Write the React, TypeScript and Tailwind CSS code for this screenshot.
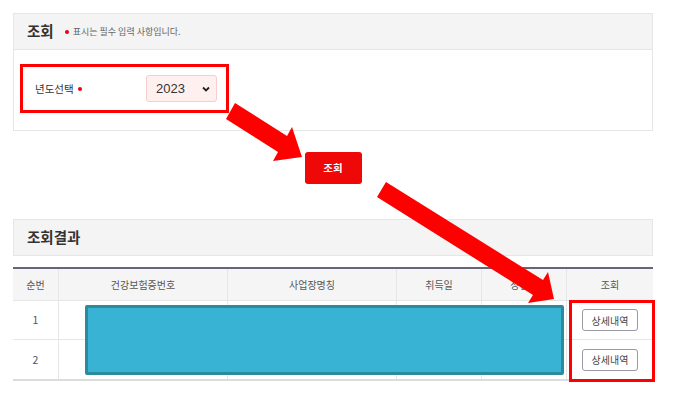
// Year lookup screen (조회 / 조회결과) with annotation overlays.

const FONT = '"Noto Sans CJK KR", "Noto Sans", sans-serif';

const COLUMNS = ['순번', '건강보험증번호', '사업장명칭', '취득일', '상실일', '조회'];

const ROWS = [{ no: 1 }, { no: 2 }];

function RequiredDot() {
  return <span className="inline-block h-[4px] w-[4px] rounded-full bg-[#e60012]" />;
}

function Arrows() {
  // annotation arrows drawn over the page
  return (
    <svg
      className="pointer-events-none absolute left-0 top-0"
      width="682"
      height="410"
      viewBox="0 0 682 410"
    >
      <polygon
        fill="#ff0000"
        points="235,103 287,136 292,127 302,157 273,161 278,152 226,119"
      />
      <polygon
        fill="#ff0000"
        points="386,182 543,280 548,272 554,299 528,303 533,295 377,197"
      />
    </svg>
  );
}

export default function App() {
  return (
    <div
      className="relative h-[410px] w-[682px] overflow-hidden bg-white pl-[13px] pt-[13px]"
      style={{ fontFamily: FONT }}
    >
      {/* ── search panel ── */}
      <section className="w-[640px] border border-[#e6e6e6]">
        <header className="flex h-[36px] items-center border-b border-[#e6e6e6] bg-[#f4f4f4] pl-[13px]">
          <h2 className="text-[14.5px] font-bold leading-none text-[#333]">조회</h2>
          <span className="ml-[11px] flex items-center gap-[4px] text-[9px] text-[#666]">
            <RequiredDot />
            표시는 필수 입력 사항입니다.
          </span>
        </header>
        <div className="h-[80px] pl-[6px] pt-[14px]">
          <div className="flex h-[49px] w-[209px] items-center border-[3px] border-[#ff0000] pl-[12px]">
            <span className="flex w-[111px] items-center gap-[4px] text-[10.5px] text-[#333]">
              년도선택
              <RequiredDot />
            </span>
            <div className="flex h-[27px] w-[71px] items-center justify-between rounded-[3px] border border-[#f6cccc] bg-[#fff0f0] pl-[9px] pr-[6px]">
              <span className="text-[13px] text-[#333]" style={{ fontFamily: '"Liberation Sans", sans-serif' }}>
                2023
              </span>
              <svg width="8" height="6" viewBox="0 0 8 6">
                <path d="M1 1.5 L4 4.5 L7 1.5" fill="none" stroke="#222" strokeWidth="1.8" />
              </svg>
            </div>
          </div>
        </div>
      </section>

      <div className="flex w-[640px] justify-center pt-[21px]">
        <button
          type="button"
          className="h-[32px] w-[57px] rounded-[3px] bg-[#ee0808] text-[10.5px] font-bold text-white"
        >
          조회
        </button>
      </div>

      {/* ── results ── */}
      <section className="mt-[35px] flex h-[37px] w-[640px] items-center border border-[#e6e6e6] bg-[#f4f4f4] pl-[13px]">
        <h2 className="text-[14.5px] font-bold leading-none text-[#333]">조회결과</h2>
      </section>

      <div className="relative mt-[11px] w-[640px]">
        <div className="grid grid-cols-[45px_169px_169px_85px_85px_87px] border-t-2 border-b-2 border-t-[#66667a] border-b-[#dcdcdc]">
          {COLUMNS.map((c, i) => (
            <div
              key={c}
              className={`flex h-[31px] items-center justify-center bg-[#f5f5f5] text-[10px] text-[#555] ${i > 0 ? 'border-l border-[#e6e6e6]' : ''}`}
            >
              {c}
            </div>
          ))}
          {ROWS.map((r, ri) =>
            COLUMNS.map((c, i) => (
              <div
                key={`${r.no}-${c}`}
                className={`flex items-center justify-center border-t border-[#e6e6e6] text-[10.5px] text-[#555] ${i > 0 ? 'border-l' : ''} ${ri === 1 ? 'h-[40px]' : 'h-[39px]'}`}
              >
                {i === 0 && r.no}
                {i === 5 && (
                  <button
                    type="button"
                    className="h-[22px] w-[56px] rounded-[3px] border border-[#9a9aa2] bg-white text-[10px] text-[#444]"
                  >
                    상세내역
                  </button>
                )}
              </div>
            )),
          )}
        </div>

        {/* redaction block over the data cells */}
        <div className="absolute left-[72px] top-[38px] h-[70px] w-[479px] rounded-[2px] border-[3px] border-[#2b8a9c] bg-[#38b3d3]" />
        {/* annotation box around the detail buttons */}
        <div className="absolute left-[556px] top-[33px] h-[82px] w-[86px] border-[3px] border-[#ff0000]" />
      </div>

      <Arrows />
    </div>
  );
}
